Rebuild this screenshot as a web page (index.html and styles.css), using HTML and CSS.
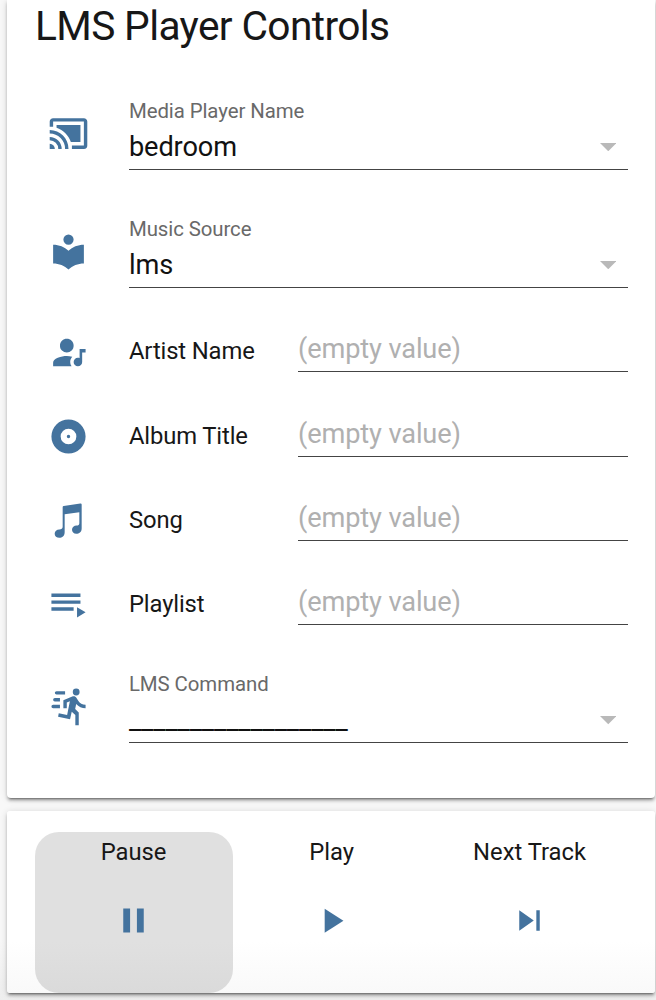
FILE: index.html
```html
<!DOCTYPE html>
<html lang="en">
<head>
<meta charset="utf-8">
<title>LMS Player Controls</title>
<link rel="stylesheet" href="styles.css">
</head>
<body>
<main class="page">
  <section class="card controls">
    <h1 class="title">LMS Player Controls</h1>

    <div class="row select-row">
      <svg class="icon" viewBox="0 0 24 24"><path d="M21,3H3C1.89,3 1,3.89 1,5V8H3V5H21V19H14V21H21A2,2 0 0,0 23,19V5C23,3.89 22.1,3 21,3M1,10V12A9,9 0 0,1 10,21H12C12,14.92 7.07,10 1,10M19,7H5V8.63C8.96,9.91 12.09,13.04 13.37,17H19M1,14V16A5,5 0 0,1 6,21H8A7,7 0 0,0 1,14M1,18V21H4A3,3 0 0,0 1,18Z"/></svg>
      <div class="select">
        <span class="label">Media Player Name</span>
        <div class="value"><span>bedroom</span><svg class="caret" viewBox="0 0 16 8"><path d="M0 0H16L8 8Z"/></svg></div>
      </div>
    </div>

    <div class="row select-row">
      <svg class="icon" viewBox="0 0 24 24"><path d="M12,8A3,3 0 0,0 15,5A3,3 0 0,0 12,2A3,3 0 0,0 9,5A3,3 0 0,0 12,8M12,11.54C9.64,9.35 6.5,8 3,8V19C6.5,19 9.64,20.35 12,22.54C14.36,20.35 17.5,19 21,19V8C17.5,8 14.36,9.35 12,11.54Z"/></svg>
      <div class="select">
        <span class="label">Music Source</span>
        <div class="value"><span>lms</span><svg class="caret" viewBox="0 0 16 8"><path d="M0 0H16L8 8Z"/></svg></div>
      </div>
    </div>

    <div class="row text-row">
      <svg class="icon" viewBox="0 0 24 24"><path d="M11,14C12,14 13.05,14.16 14.2,14.44C13.39,15.31 13,16.33 13,17.5C13,18.39 13.25,19.23 13.78,20H3V18C3,16.81 3.91,15.85 5.74,15.12C7.57,14.38 9.33,14 11,14M11,12C9.92,12 9,11.61 8.18,10.83C7.38,10.05 7,9.11 7,8C7,6.92 7.38,6 8.18,5.18C9,4.38 9.92,4 11,4C12.11,4 13.05,4.38 13.83,5.18C14.61,6 15,6.92 15,8C15,9.11 14.61,10.05 13.83,10.83C13.05,11.61 12.11,12 11,12M18.5,10H22V12H20V17.5A2.5,2.5 0 0,1 17.5,20A2.5,2.5 0 0,1 15,17.5A2.5,2.5 0 0,1 17.5,15C17.86,15 18.19,15.07 18.5,15.21V10Z"/></svg>
      <span class="name">Artist Name</span>
      <div class="field">(empty value)</div>
    </div>

    <div class="row text-row">
      <svg class="icon" viewBox="0 0 24 24"><path fill-rule="evenodd" d="M12,2A10,10 0 1,0 12,22A10,10 0 1,0 12,2ZM12,7.4A4.6,4.6 0 1,1 12,16.6A4.6,4.6 0 1,1 12,7.4ZM12,11A1,1 0 1,0 12,13A1,1 0 1,0 12,11Z"/></svg>
      <span class="name">Album Title</span>
      <div class="field">(empty value)</div>
    </div>

    <div class="row text-row">
      <svg class="icon" viewBox="24 31.5 123 123"><path d="M68 53Q68 50 71 49.500L121 42Q125 41.500 125 45V117C125 128 117 133 109 133C101 133 96 128 96 121C96 113 102 108 110 108C115 108 118 106 118 101V68L74 74.500V128C74 139 66 145 58 145C50 145 44 141 44 133C44 125 50 120 58 120C64 119 68 118 68 112Z"/></svg>
      <span class="name">Song</span>
      <div class="field">(empty value)</div>
    </div>

    <div class="row text-row">
      <svg class="icon" viewBox="0 0 24 24"><path d="M19,9H2V11H19V9M19,5H2V7H19V5M2,15H15V13H2V15M17,13V19L22,16L17,13Z"/></svg>
      <span class="name">Playlist</span>
      <div class="field">(empty value)</div>
    </div>

    <div class="row select-row">
      <svg class="icon" viewBox="0 0 24 24"><path d="M16.5,5.5A2,2 0 0,0 18.5,3.5A2,2 0 0,0 16.5,1.5A2,2 0 0,0 14.5,3.5A2,2 0 0,0 16.5,5.5M12.9,19.4L13.9,15L16,17V23H18V15.5L15.9,13.5L16.5,10.5C17.89,12.09 19.89,13 22,13V11C20.24,11.03 18.6,10.11 17.7,8.6L16.7,7C16.34,6.4 15.7,6 15,6C14.7,6 14.5,6.1 14.2,6.1L9,8.3V13H11V9.6L12.8,8.9L11.2,17L6.3,16L5.9,18L12.9,19.4M4,9A1,1 0 0,1 3,8A1,1 0 0,1 4,7H7V9H4M5,5A1,1 0 0,1 4,4A1,1 0 0,1 5,3H10V5H5M3,13A1,1 0 0,1 2,12A1,1 0 0,1 3,11H7V13H3Z"/></svg>
      <div class="select">
        <span class="label">LMS Command</span>
        <div class="value"><span>__________________</span><svg class="caret" viewBox="0 0 16 8"><path d="M0 0H16L8 8Z"/></svg></div>
      </div>
    </div>
  </section>

  <section class="card actions">
    <button class="action active">
      <span>Pause</span>
      <svg class="icon" viewBox="0 0 24 24"><path d="M14,19H18V5H14M6,19H10V5H6V19Z"/></svg>
    </button>
    <button class="action">
      <span>Play</span>
      <svg class="icon" viewBox="0 0 24 24"><path d="M8,5.14V19.14L19,12.14L8,5.14Z"/></svg>
    </button>
    <button class="action">
      <span>Next Track</span>
      <svg class="icon" viewBox="0 0 24 24"><path d="M16,18H18V6H16M6,18L14.5,12L6,6V18Z"/></svg>
    </button>
  </section>
</main>
</body>
</html>
```
FILE: styles.css
```css
* { box-sizing: border-box; }

body {
  margin: 0;
  background: #f7f7f7;
  color: #171717;
  font-family: Roboto, "Liberation Sans", sans-serif;
}

.page {
  display: flex;
  flex-direction: column;
  gap: 13px;
  height: 1000px;
  padding: 0 1px 0 7.400px;
  overflow: hidden;
  background: linear-gradient(#f8f8f8 940px, #eeeeee);
}

.card {
  flex: none;
  background: #fff;
  border-radius: 3px;
  box-shadow: 0 3px 3px rgba(0, 0, 0, .2), 0 1px 7px rgba(0, 0, 0, .15), 0 3px 2px -2px rgba(0, 0, 0, .4);
}

.controls {
  height: 798px;
  padding: 0 27px 0 27.600px;
  border-radius: 0 0 4px 4px;
}

.title {
  height: 74px;
  margin: 0;
  font-size: 40.700px;
  font-weight: 400;
  line-height: 52px;
  letter-spacing: -.64px;
  white-space: nowrap;
}

.row {
  display: flex;
  align-items: center;
  padding-left: 12.800px;
}

.icon {
  flex: none;
  width: 41px;
  height: 41px;
  fill: #44739e;
}

.select-row { height: 118px; }
.text-row { height: 84.350px; }

.select {
  flex: 1;
  height: 70px;
  margin-top: 4px;
  margin-left: 40.200px;
  border-bottom: 1px solid #444;
}

.label {
  display: block;
  color: #696969;
  font-size: 20.400px;
  line-height: 22px;
  letter-spacing: -.08px;
}

.value {
  display: flex;
  align-items: center;
  justify-content: space-between;
  height: 50px;
  padding-right: 12px;
  color: #111;
  font-size: 27.200px;
  line-height: 48px;
  letter-spacing: -.12px;
}

.caret {
  width: 16.500px;
  height: 8.250px;
  fill: #b9b9b9;
}

.name {
  width: 169px;
  margin-bottom: 2px;
  margin-left: 40.200px;
  font-size: 23.800px;
  line-height: 30px;
  letter-spacing: -.13px;
}

.field {
  flex: 1;
  height: 41px;
  margin-bottom: 1px;
  border-bottom: 1px solid #444;
  color: #b0b0b0;
  font-size: 27.200px;
  line-height: 37.500px;
  letter-spacing: -.13px;
}

.actions {
  display: grid;
  grid-template-columns: repeat(3, 198px);
  height: 182px;
  padding: 20.500px 0 0 27.200px;
  background: linear-gradient(#fff 130px, #f9f9f9);
}

.action {
  display: flex;
  flex-direction: column;
  align-items: center;
  gap: 33px;
  height: 161px;
  padding: 5px 0 0;
  border: 0;
  border-radius: 24px;
  background: none;
  color: #171717;
  font-family: inherit;
  font-size: 23.800px;
  line-height: 30px;
}

.active { background: linear-gradient(#e0e0e0 110px, #dadada); }
```
